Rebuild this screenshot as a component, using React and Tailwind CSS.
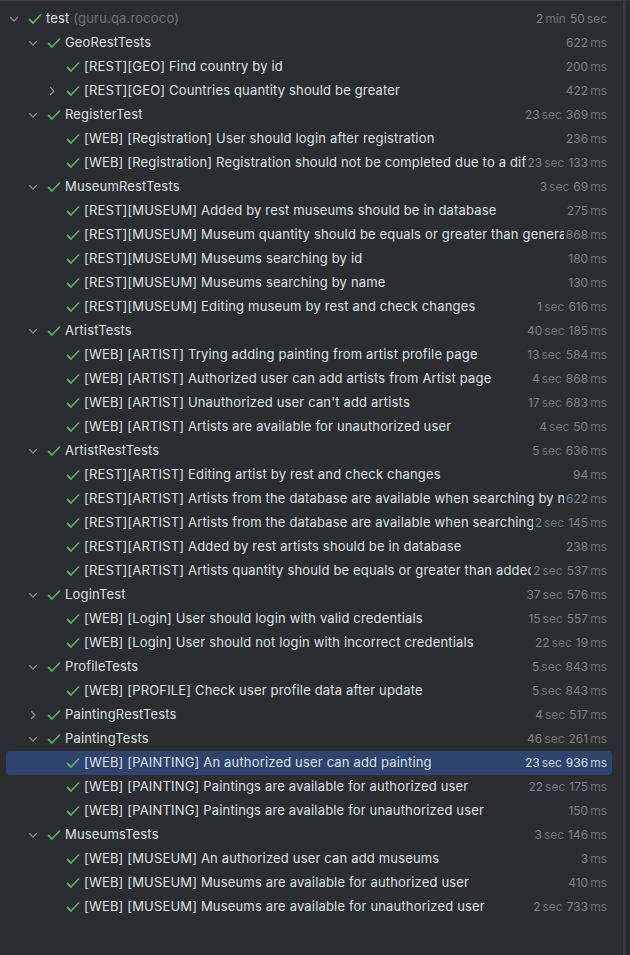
import React from 'react';

const rows = [
	{ level: 0, open: true, name: 'test', extra: ' (guru.qa.rococo)', time: [['2', 'min'], ['50', 'sec']] },
	{ level: 1, open: true, name: 'GeoRestTests', time: [['622', 'ms']] },
	{ level: 2, name: '[REST][GEO] Find country by id', time: [['200', 'ms']] },
	{ level: 2, open: false, name: '[REST][GEO] Countries quantity should be greater', time: [['422', 'ms']] },
	{ level: 1, open: true, name: 'RegisterTest', time: [['23', 'sec'], ['369', 'ms']] },
	{ level: 2, name: '[WEB] [Registration] User should login after registration', time: [['236', 'ms']] },
	{ level: 2, name: '[WEB] [Registration] Registration should not be completed due to a different password', time: [['23', 'sec'], ['133', 'ms']] },
	{ level: 1, open: true, name: 'MuseumRestTests', time: [['3', 'sec'], ['69', 'ms']] },
	{ level: 2, name: '[REST][MUSEUM] Added by rest museums should be in database', time: [['275', 'ms']] },
	{ level: 2, name: '[REST][MUSEUM] Museum quantity should be equals or greater than generated', time: [['868', 'ms']] },
	{ level: 2, name: '[REST][MUSEUM] Museums searching by id', time: [['180', 'ms']] },
	{ level: 2, name: '[REST][MUSEUM] Museums searching by name', time: [['130', 'ms']] },
	{ level: 2, name: '[REST][MUSEUM] Editing museum by rest and check changes', time: [['1', 'sec'], ['616', 'ms']] },
	{ level: 1, open: true, name: 'ArtistTests', time: [['40', 'sec'], ['185', 'ms']] },
	{ level: 2, name: '[WEB] [ARTIST] Trying adding painting from artist profile page', time: [['13', 'sec'], ['584', 'ms']] },
	{ level: 2, name: '[WEB] [ARTIST] Authorized user can add artists from Artist page', time: [['4', 'sec'], ['868', 'ms']] },
	{ level: 2, name: "[WEB] [ARTIST] Unauthorized user can't add artists", time: [['17', 'sec'], ['683', 'ms']] },
	{ level: 2, name: '[WEB] [ARTIST] Artists are available for unauthorized user', time: [['4', 'sec'], ['50', 'ms']] },
	{ level: 1, open: true, name: 'ArtistRestTests', time: [['5', 'sec'], ['636', 'ms']] },
	{ level: 2, name: '[REST][ARTIST] Editing artist by rest and check changes', time: [['94', 'ms']] },
	{ level: 2, name: '[REST][ARTIST] Artists from the database are available when searching by name', time: [['622', 'ms']] },
	{ level: 2, name: '[REST][ARTIST] Artists from the database are available when searching by id', time: [['2', 'sec'], ['145', 'ms']] },
	{ level: 2, name: '[REST][ARTIST] Added by rest artists should be in database', time: [['238', 'ms']] },
	{ level: 2, name: '[REST][ARTIST] Artists quantity should be equals or greater than added', time: [['2', 'sec'], ['537', 'ms']] },
	{ level: 1, open: true, name: 'LoginTest', time: [['37', 'sec'], ['576', 'ms']] },
	{ level: 2, name: '[WEB] [Login] User should login with valid credentials', time: [['15', 'sec'], ['557', 'ms']] },
	{ level: 2, name: '[WEB] [Login] User should not login with incorrect credentials', time: [['22', 'sec'], ['19', 'ms']] },
	{ level: 1, open: true, name: 'ProfileTests', time: [['5', 'sec'], ['843', 'ms']] },
	{ level: 2, name: '[WEB] [PROFILE] Check user profile data after update', time: [['5', 'sec'], ['843', 'ms']] },
	{ level: 1, open: false, name: 'PaintingRestTests', time: [['4', 'sec'], ['517', 'ms']] },
	{ level: 1, open: true, name: 'PaintingTests', time: [['46', 'sec'], ['261', 'ms']] },
	{ level: 2, selected: true, name: '[WEB] [PAINTING] An authorized user can add painting', time: [['23', 'sec'], ['936', 'ms']] },
	{ level: 2, name: '[WEB] [PAINTING] Paintings are available for authorized user', time: [['22', 'sec'], ['175', 'ms']] },
	{ level: 2, name: '[WEB] [PAINTING] Paintings are available for unauthorized user', time: [['150', 'ms']] },
	{ level: 1, open: true, name: 'MuseumsTests', time: [['3', 'sec'], ['146', 'ms']] },
	{ level: 2, name: '[WEB] [MUSEUM] An authorized user can add museums', time: [['3', 'ms']] },
	{ level: 2, name: '[WEB] [MUSEUM] Museums are available for authorized user', time: [['410', 'ms']] },
	{ level: 2, name: '[WEB] [MUSEUM] Museums are available for unauthorized user', time: [['2', 'sec'], ['733', 'ms']] },
];

const indents = ['pl-0', 'pl-[19px]', 'pl-[38px]'];

const Check = () => (
	<svg width="14" height="14" viewBox="0 0 14 14" fill="none">
		<path d="M1.5 7.5 L5 11 L12.5 3" stroke="#5fad65" strokeWidth="1.8" strokeLinecap="round" strokeLinejoin="round" />
	</svg>
);

const Chevron = ({ open }) => (
	<svg width="16" height="16" viewBox="0 0 16 16" fill="none">
		{open
			? <path d="M4.5 6.5 L8 10 L11.5 6.5" stroke="#8c8f94" strokeWidth="1.2" strokeLinecap="round" strokeLinejoin="round" />
			: <path d="M6.5 4.5 L10 8 L6.5 11.5" stroke="#8c8f94" strokeWidth="1.2" strokeLinecap="round" strokeLinejoin="round" />}
	</svg>
);

const Time = ({ parts, selected }) => (
	<span className={'shrink-0 ml-[2px] text-[12px] whitespace-nowrap ' + (selected ? 'text-[#dfe1e5]' : 'text-[#7e8289]')}>
		{parts.map((p, i) => (
			<span key={i} className={i > 0 ? 'ml-[4px]' : ''}>
				{p[0]}<span className={'ml-[2px] ' + (selected ? 'text-[#c9ccd6]' : 'text-[#6f737a]')}>{p[1]}</span>
			</span>
		))}
	</span>
);

class App extends React.Component {
	render() {
		return (
			<div className="flex h-[955px] w-[630px] overflow-hidden bg-[#2b2d30] border-t border-[#393b40]" style={{ fontFamily: 'Inter, "Noto Sans", sans-serif' }}>
				<div className="flex-1 min-w-0 pt-[6px] pl-[6px] pr-[11px]">
					{rows.map((r, i) => (
						<div key={i} className={'flex items-center h-[24px] rounded-[4px] pr-[5px] ' + indents[r.level] + (r.selected ? ' bg-[#2e436e]' : '')}>
							<div className="w-[16px] shrink-0 flex items-center justify-center">
								{r.open !== undefined ? <Chevron open={r.open} /> : null}
							</div>
							<div className="ml-[6px] w-[14px] shrink-0 flex items-center">
								<Check />
							</div>
							<div className="ml-[4px] flex-1 min-w-0 overflow-hidden whitespace-nowrap text-[13px] tracking-[0.17px] text-[#dfe1e5]">
								{r.name}
								{r.extra ? <span className="text-[#6f737a]">{r.extra}</span> : null}
							</div>
							<Time parts={r.time} selected={r.selected} />
						</div>
					))}
				</div>
				<div className="w-[3px] bg-[#393b40]"></div>
				<div className="w-[4px] bg-[#27292c]"></div>
			</div>
		);
	}
}

export default App;
